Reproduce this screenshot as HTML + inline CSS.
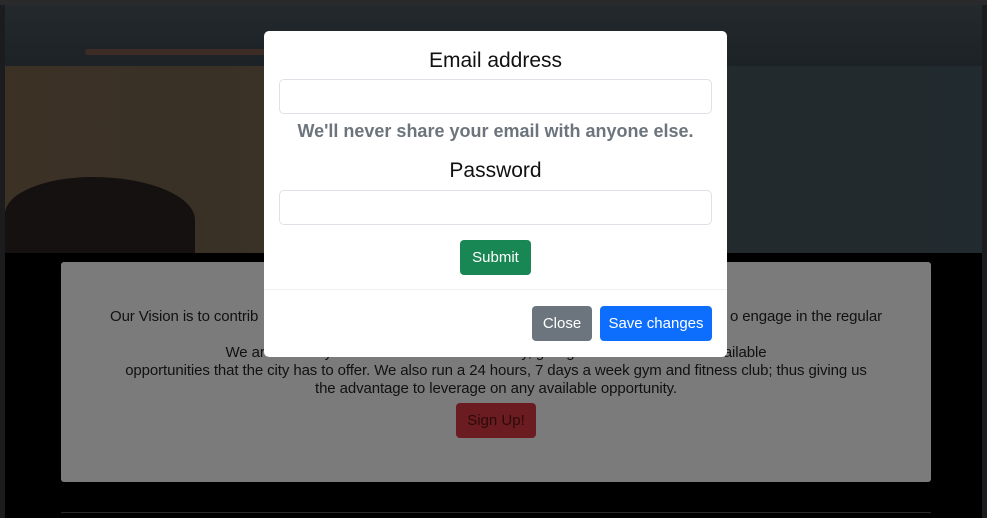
<!DOCTYPE html>
<html><head><style>
html,body{margin:0;padding:0;width:987px;height:518px;overflow:hidden;background:#000;font-family:"Liberation Sans",sans-serif;}
.top{position:absolute;left:0;top:0;width:987px;height:5px;background:#2a2a2c;}
.rs{position:absolute;left:0;top:5px;width:5px;height:513px;background:#1c1c1e;}
.rr{position:absolute;left:982px;top:5px;width:5px;height:513px;background:#1c1c1e;}
.hero{position:absolute;left:5px;top:5px;width:977px;height:248px;overflow:hidden;
background:linear-gradient(90deg,#3b3125 0%,#3a3127 30%,#2c2c2b 55%,#232a2e 75%,#212a2e 100%);}
.sky{position:absolute;left:0;top:0;width:977px;height:61px;background:linear-gradient(180deg,#23292c,#1c2226);}
.glow{position:absolute;left:80px;top:44px;width:200px;height:6px;background:#3d2c26;border-radius:3px;}
.rock{position:absolute;left:0;top:172px;width:190px;height:80px;background:#141110;border-radius:60% 70% 0 0;}
.panel{position:absolute;left:61px;top:262px;width:870px;height:220px;background:#7b7b7b;border-radius:3px;}
.panel p{margin:0;text-align:center;font-size:15px;color:#111;line-height:18px;position:absolute;left:40px;right:40px;letter-spacing:-0.1px;}
.sign{position:absolute;left:395px;top:141px;width:80px;height:35px;background:#6a1c20;border-radius:4px;color:#2b0a0c;font-size:15px;line-height:36px;text-align:center;}
.hr{position:absolute;left:61px;top:512px;width:870px;height:1px;background:#2a2a2a;}
.modal{position:absolute;left:264px;top:31px;width:463px;height:326px;background:#fff;border-radius:5px;}
.lbl{position:absolute;left:0;width:463px;text-align:center;font-size:21px;color:#111;}
.inp{position:absolute;left:15px;width:431px;height:33px;border:1px solid #dee2e6;border-radius:5px;}
.help{position:absolute;left:0;width:463px;top:90px;text-align:center;font-size:18px;color:#6c757d;font-weight:bold;}
.btn{position:absolute;border-radius:4px;color:#fff;font-size:15px;text-align:center;line-height:36px;height:35px;}
.ft{position:absolute;left:0;top:258px;width:463px;height:1px;background:#eef0f2;}
</style></head><body>
<div class="top"></div><div class="rs"></div><div class="rr"></div>
<div class="hero"><div class="sky"></div><div class="glow"></div><div class="rock"></div></div>
<div class="panel">
<p style="top:46px;left:49px;right:auto;text-align:left">Our Vision is to contrib</p>
<p style="top:46px;left:auto;right:49px;text-align:right">o engage in the regular</p>
<p style="top:82px">We are centrally located in the heart of the city, giving us access to all the available<br>opportunities that the city has to offer. We also run a 24 hours, 7 days a week gym and fitness club; thus giving us<br>the advantage to leverage on any available opportunity.</p>
<div class="sign">Sign Up!</div>
</div>
<div class="hr"></div>
<div class="modal">
<div class="lbl" style="top:18px">Email address</div>
<div class="inp" style="top:48px"></div>
<div class="help">We'll never share your email with anyone else.</div>
<div class="lbl" style="top:128px">Password</div>
<div class="inp" style="top:159px"></div>
<div class="btn" style="left:196px;top:209px;width:71px;background:#198754">Submit</div>
<div class="ft"></div>
<div class="btn" style="left:268px;top:275px;width:60px;background:#6c757d">Close</div>
<div class="btn" style="left:336px;top:275px;width:112px;background:#0d6efd">Save changes</div>
</div>
</body></html>
